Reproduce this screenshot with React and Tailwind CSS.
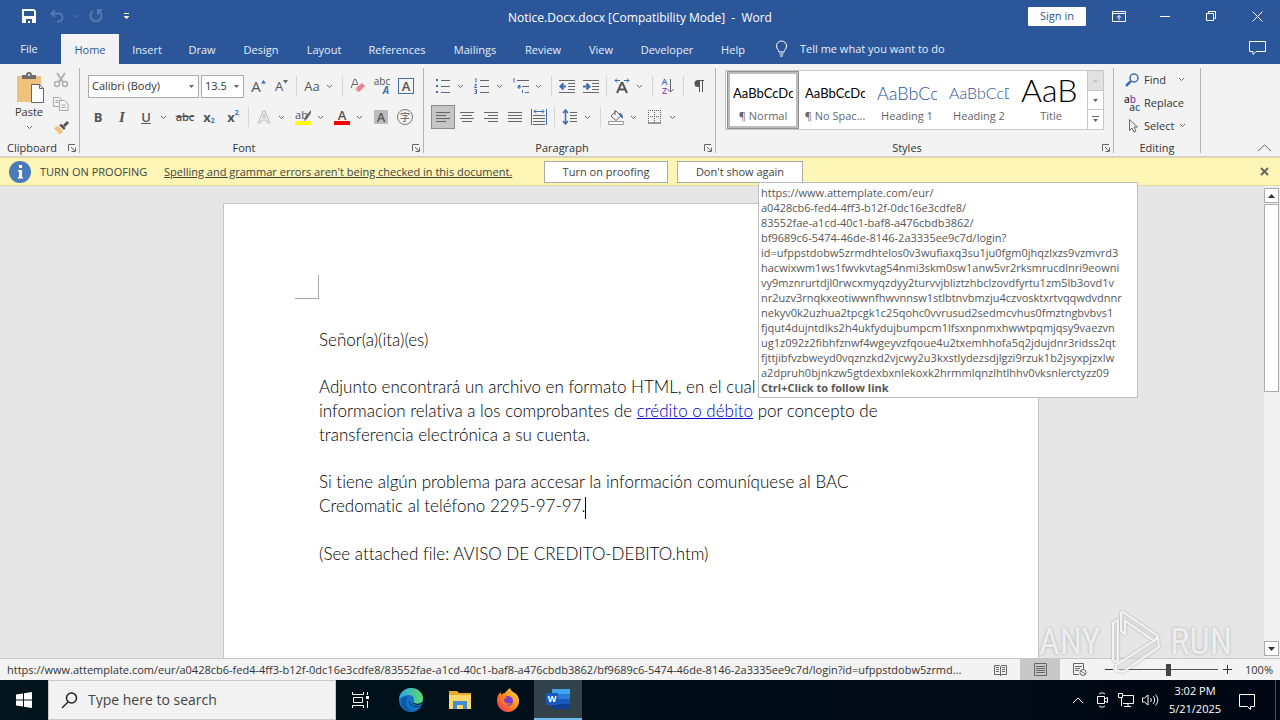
import clsx from "clsx";

const tabs = [
  { name: "Home", width: "w-[58px]", active: true },
  { name: "Insert", width: "w-14" },
  { name: "Draw", width: "w-[54px]" },
  { name: "Design", width: "w-16" },
  { name: "Layout", width: "w-[62px]" },
  { name: "References", width: "w-[84px]" },
  { name: "Mailings", width: "w-[72px]" },
  { name: "Review", width: "w-16" },
  { name: "View", width: "w-[52px]" },
  { name: "Developer", width: "w-20" },
  { name: "Help", width: "w-[52px]" },
];

const styleItems = [
  { label: "¶ Normal", preview: "AaBbCcDc", look: "text-[13px] text-black", selected: true },
  { label: "¶ No Spac...", preview: "AaBbCcDc", look: "text-[13px] text-black" },
  { label: "Heading 1", preview: "AaBbCc", look: "text-[18px] font-light text-[#2f5496]" },
  { label: "Heading 2", preview: "AaBbCcD", look: "text-[16px] font-light text-[#2f5496]" },
  { label: "Title", preview: "AaB", look: "pb-[6px] text-[32px] font-light text-black" },
];

const linkLines = [
  "https://www.attemplate.com/eur/",
  "a0428cb6-fed4-4ff3-b12f-0dc16e3cdfe8/",
  "83552fae-a1cd-40c1-baf8-a476cbdb3862/",
  "bf9689c6-5474-46de-8146-2a3335ee9c7d/login?",
  "id=ufppstdobw5zrmdhtelos0v3wufiaxq3su1ju0fgm0jhqzlxzs9vzmvrd3",
  "hacwixwm1ws1fwvkvtag54nmi3skm0sw1anw5vr2rksmrucdlnri9eowni",
  "vy9mznrurtdjl0rwcxmyqzdyy2turvvjbliztzhbclzovdfyrtu1zm5lb3ovd1v",
  "nr2uzv3rnqkxeotiwwnfhwvnnsw1stlbtnvbmzju4czvosktxrtvqqwdvdnnr",
  "nekyv0k2uzhua2tpcgk1c25qohc0vvrusud2sedmcvhus0fmztngbvbvs1",
  "fjqut4dujntdlks2h4ukfydujbumpcm1lfsxnpnmxhwwtpqmjqsy9vaezvn",
  "ug1z092z2fibhfznwf4wgeyvzfqoue4u2txemhhofa5q2jdujdnr3ridss2qt",
  "fjttjibfvzbweyd0vqznzkd2vjcwy2u3kxstlydezsdjlgzi9rzuk1b2jsyxpjzxlw",
  "a2dpruh0bjnkzw5gtdexbxnlekoxk2hrmmlqnzlhtlhhv0vksnlerctyzz09",
];

const Svg = ({ w = 16, h = 16, children, className }) => (
  <svg
    width={w}
    height={h}
    viewBox={`0 0 ${w} ${h}`}
    fill="none"
    stroke="#666"
    className={clsx("shrink-0", className)}
    aria-hidden="true"
  >
    {children}
  </svg>
);

const Chevron = ({ className }) => (
  <Svg w={7} h={5} className={className}>
    <path d="M1 1l2.500 2.500L6 1" stroke="currentColor" />
  </Svg>
);

const Cell = ({ label, children, className }) => (
  <button
    type="button"
    aria-label={label}
    className={clsx("flex h-6 w-6 shrink-0 items-center justify-center text-[#555]", className)}
  >
    {children}
  </button>
);

const More = ({ label }) => (
  <button
    type="button"
    aria-label={label}
    className="flex h-6 w-[15px] shrink-0 items-center pl-[2px] text-[#666]"
  >
    <Chevron />
  </button>
);

const Sep = () => (
  <span className="flex h-5 w-[7px] shrink-0 justify-center">
    <span className="w-px bg-[#d5d5d5]" />
  </span>
);

const Group = ({ name, width, launcher = true, children }) => (
  <section
    aria-label={name}
    className={clsx("mt-1 flex h-[85px] shrink-0 flex-col border-r border-[#b5b5b5]", width)}
  >
    <div className="h-[72px] shrink-0">{children}</div>
    <div className="flex h-4 shrink-0 items-center">
      <span className={clsx("flex-1 text-center text-[#333]", launcher && "pr-1")}>{name}</span>
      {launcher && (
        <button type="button" aria-label={`${name} settings`} className="w-[11px]">
          <Svg w={8} h={8}>
            <path d="M0.5 7V0.5H7M3 3l4 4M7.5 3.5v4h-4" />
          </Svg>
        </button>
      )}
    </div>
  </section>
);

// rows of horizontal rules: each entry is [x1, x2, y]
const Rules = ({ rows, color = "#666" }) => (
  <path d={rows.map(([a, b, y]) => `M${a} ${y}H${b}`).join("")} stroke={color} />
);

const TitleBar = () => (
  <div className="flex h-8 items-center text-white">
    <div className="flex grow basis-1/3 items-center pl-[22px]">
      <button type="button" aria-label="Save" className="mr-[14px]">
        <Svg w={14} h={14}>
          <path d="M0 0h12l2 2v12H0z" fill="#fff" stroke="none" />
          <path d="M2 2h10v5H2zM4 10h6v4H8v-2H6v2H4z" fill="#2b579a" stroke="none" />
        </Svg>
      </button>
      <button type="button" aria-label="Undo" className="flex items-center gap-2 text-[#5578b3]">
        <Svg w={14} h={14}>
          <path d="M5 1L1.500 4.500 5 8M2 4.500h6.500a4 4 0 0 1 0 8H7" stroke="currentColor" strokeWidth="2" />
        </Svg>
        <Chevron />
      </button>
      <button type="button" aria-label="Repeat" className="ml-[10px] text-[#5578b3]">
        <Svg w={14} h={14}>
          <path d="M4 2a5.500 5.500 0 1 0 6 0M9 6V1h4" stroke="currentColor" strokeWidth="2" />
        </Svg>
      </button>
      <button type="button" aria-label="Customize toolbar" className="ml-5">
        <Svg w={7} h={7}>
          <path d="M1 .5h5" stroke="#fff" />
          <path d="M0.500 3h6l-3 3z" fill="#fff" stroke="none" />
        </Svg>
      </button>
    </div>
    <h1 className="pt-1 text-[12px] whitespace-pre">Notice.Docx.docx [Compatibility Mode]  -  Word</h1>
    <div className="flex grow basis-1/3 items-center justify-end pr-[17px]">
      <button type="button" className="mr-[26px] h-[19px] w-[58px] rounded-[1px] bg-white text-[#2b579a]">
        Sign in
      </button>
      <button type="button" aria-label="Ribbon display options" className="mr-[34px]">
        <Svg w={14} h={11}>
          <path d="M.5 .5h13v10H.5zM.5 2.500h13M7 9V4.500M5 6.500l2-2 2 2" stroke="#fff" />
        </Svg>
      </button>
      <button type="button" aria-label="Minimize" className="mr-9">
        <Svg w={10} h={10}>
          <path d="M0 5.500h10" stroke="#fff" />
        </Svg>
      </button>
      <button type="button" aria-label="Restore" className="mr-9">
        <Svg w={10} h={10}>
          <path d="M.5 2.500h7v7h-7zM2.500 2V.5h7v7H8" stroke="#fff" />
        </Svg>
      </button>
      <button type="button" aria-label="Close">
        <Svg w={11} h={11}>
          <path d="M.5 .5l10 10M10.500 .5l-10 10" stroke="#fff" />
        </Svg>
      </button>
    </div>
  </div>
);

const Tabs = () => (
  <nav className="flex h-8 items-end text-[#e8eef7]">
    <a href="#file" className="mr-[3px] flex h-[31px] w-[58px] items-center justify-center">
      File
    </a>
    {tabs.map((t) => (
      <a
        key={t.name}
        href={`#${t.name.toLowerCase()}`}
        className={clsx(
          "flex h-[30px] items-center justify-center pt-[2px]",
          t.width,
          t.active && "bg-[#f3f3f3] text-[#2b579a]"
        )}
      >
        {t.name}
      </a>
    ))}
    <button type="button" className="ml-4 flex h-[31px] items-center gap-3">
      <Svg w={13} h={17}>
        <path
          d="M4 12c0-2-2.500-3-2.500-6a5 5 0 0 1 10 0c0 3-2.500 4-2.500 6zM4.500 14h4M5 16h3"
          stroke="#fff"
        />
      </Svg>
      Tell me what you want to do
    </button>
    <button type="button" aria-label="Comments" className="mr-[14px] ml-auto flex h-8 items-center">
      <Svg w={17} h={15}>
        <path d="M.5 .5h16v10H7l-3 3v-3H.5z" stroke="#fff" />
      </Svg>
    </button>
  </nav>
);

const Clipboard = () => (
  <Group name="Clipboard" width="w-20">
    <div className="flex pl-[14px]">
      <button type="button" className="flex w-[30px] flex-col items-center pt-1 text-[#333]">
        <Svg w={30} h={31}>
          <path d="M3 4h24v26H3z" fill="#eec27d" stroke="none" />
          <path d="M8 7V3h4a3 3 0 0 1 6 0h4v4z" fill="#6d6d6d" stroke="none" />
          <circle cx="15" cy="3" r="1" fill="#fff" stroke="none" />
          <path d="M17.500 12.500h8l4 4v14h-12z" fill="#fff" />
          <path d="M25.500 12.500v4h4" />
        </Svg>
        <span className="leading-[18px]">Paste</span>
        <Chevron className="mt-1 text-[#666]" />
      </button>
      <div className="flex flex-col pl-[5px]">
        <Cell label="Cut">
          <Svg>
            <g stroke="#b0b0b0" strokeWidth="2">
              <path d="M4 1l6 9M12 1L6 10" />
              <circle cx="4" cy="12" r="2.500" strokeWidth="1.500" />
              <circle cx="12" cy="12" r="2.500" strokeWidth="1.500" />
            </g>
          </Svg>
        </Cell>
        <Cell label="Copy">
          <Svg>
            <g stroke="#a8a8a8">
              <path d="M6 10.500H.5v-9h6l3 3M2.500 4.500h3M2.500 6.500h3" />
              <path d="M6.500 4.500h5l3.500 3.500v6.500H6.500zM8.500 9h4M8.500 11.500h4" />
            </g>
          </Svg>
        </Cell>
        <Cell label="Format painter">
          <Svg>
            <path d="M1 8l4-2 5 5-3 4z" fill="#eec27d" stroke="none" />
            <path d="M6 5l5 5 1.500-2L8.500 4zM10 5l4-4 2 2-4 4z" fill="#555" stroke="none" />
          </Svg>
        </Cell>
      </div>
    </div>
  </Group>
);

const Combo = ({ label, value, width }) => (
  <label className={clsx("flex h-[23px] items-center border border-[#ababab] bg-white pr-1", width)}>
    <span className="sr-only">{label}</span>
    <select className="h-full min-w-0 flex-1 appearance-none bg-transparent pl-[3px] text-[#333] outline-none">
      <option>{value}</option>
    </select>
    <Svg w={5} h={3}>
      <path d="M0 0h5L2.500 3z" fill="#666" stroke="none" />
    </Svg>
  </label>
);

const FontGroup = () => (
  <Group name="Font" width="w-[344px]">
    <div className="flex items-center pt-[6px] pl-2">
      <Combo label="Font" value="Calibri (Body)" width="w-[111px] mr-[2px]" />
      <Combo label="Font size" value="13.5" width="w-[43px] mr-[3px]" />
      <Cell label="Grow font" className="w-[23px] text-[15px]">
        A
        <Svg w={5} h={12}>
          <path d="M0 3.500L2.500 0 5 3.500z" fill="#3e6db5" stroke="none" />
        </Svg>
      </Cell>
      <Cell label="Shrink font" className="w-[23px] text-[13px]">
        A
        <Svg w={5} h={12}>
          <path d="M0 0h5L2.500 3.500z" fill="#666" stroke="none" />
        </Svg>
      </Cell>
      <Sep />
      <Cell label="Change case" className="text-[13px]">Aa</Cell>
      <More label="Change case options" />
      <Sep />
      <Cell label="Clear formatting">
        <Svg>
          <path d="M1 10L4.500 1h1L8 7M2.500 6.500H7" />
          <path d="M6 10l6-5 3 3-6 6z" fill="#e9808f" stroke="none" />
          <path d="M5 11l1-1 3 4H7z" fill="#f3b0ba" stroke="none" />
        </Svg>
      </Cell>
      <Cell label="Phonetic guide" className="flex-col">
        <span className="text-[10px] leading-[9px]">abc</span>
        <span className="pl-2 text-[10px] leading-[9px] font-bold text-[#3e6db5] italic">A</span>
      </Cell>
      <Cell label="Character border">
        <span className="flex h-4 w-4 items-center justify-center border border-[#41719c] text-[13px] font-semibold">
          A
        </span>
      </Cell>
    </div>
    <div className="flex items-center pt-[7px] pl-[6px]">
      <Cell label="Bold" className="text-[13px] font-bold">B</Cell>
      <Cell label="Italic" className="font-['Liberation_Serif',serif] text-[15px] font-semibold italic">I</Cell>
      <Cell label="Underline" className="text-[13px] font-semibold underline">U</Cell>
      <More label="Underline options" />
      <Cell label="Strikethrough" className="font-semibold line-through">abc</Cell>
      <Cell label="Subscript" className="text-[13px] font-bold">
        x<span className="pt-2 text-[7px] text-[#3e6db5]">2</span>
      </Cell>
      <Cell label="Superscript" className="text-[13px] font-bold">
        x<span className="pb-2 text-[7px] text-[#3e6db5]">2</span>
      </Cell>
      <Sep />
      <Cell label="Text effects">
        <Svg>
          <path d="M2 14L7 2h2l5 12h-2.500l-1-3h-5l-1 3zM6.500 8.500h3L8 4.500z" stroke="#bbb" />
        </Svg>
      </Cell>
      <More label="Text effects options" />
      <Cell label="Text highlight color" className="flex-col">
        <span className="flex h-3 items-center text-[11px]">
          ab
          <Svg w={7} h={11} className="-ml-1">
            <path d="M7 0v3L3 9l-3 2 1-4z" fill="#666" stroke="none" />
          </Svg>
        </span>
        <span className="h-1 w-4 bg-[#ffff00]" />
      </Cell>
      <More label="Highlight options" />
      <Cell label="Font color" className="flex-col">
        <span className="h-3 text-[13px] leading-3 font-semibold">A</span>
        <span className="h-1 w-4 bg-[#ff0000]" />
      </Cell>
      <More label="Font color options" />
      <Cell label="Character shading">
        <span className="flex h-[14px] w-[14px] items-center justify-center bg-[#bdbdbd] text-[13px] font-semibold">
          A
        </span>
      </Cell>
      <Cell label="Enclose characters">
        <span className="flex h-4 w-4 items-center justify-center rounded-full border border-[#777] font-['Noto_Sans_CJK_SC',sans-serif] text-[10px]">
          字
        </span>
      </Cell>
    </div>
  </Group>
);

const ParagraphGroup = () => (
  <Group name="Paragraph" width="w-[292px]">
    <div className="flex items-center pt-[6px] pl-[7px]">
      <Cell label="Bullets">
        <Svg>
          <path d="M1 1h2v2H1zM1 7h2v2H1zM1 13h2v2H1z" fill="#3e6db5" stroke="none" />
          <Rules rows={[[6, 15, 2.5], [6, 15, 8.5], [6, 15, 14.5]]} />
        </Svg>
      </Cell>
      <More label="Bullet options" />
      <Cell label="Numbering">
        <Svg>
          <path
            d="M1 1.500l1-1v4M.5 6.500h2l-2 3h2.500M.5 11.500h2v4H.5M1 13.500h1.500"
            stroke="#3e6db5"
          />
          <Rules rows={[[6, 15, 2.5], [6, 15, 8.5], [6, 15, 14.5]]} />
        </Svg>
      </Cell>
      <More label="Numbering options" />
      <Cell label="Multilevel list">
        <Svg>
          <path d="M0 1.500l1-1v4M5 7.500h2v2.500H5V8.500h2M9.500 12v3" stroke="#3e6db5" />
          <Rules rows={[[4, 16, 2.5], [9, 16, 8.5], [12, 16, 14.5]]} />
        </Svg>
      </Cell>
      <More label="Multilevel options" />
      <Sep />
      <Cell label="Decrease indent">
        <Svg>
          <Rules rows={[[0, 16, 2.5], [9, 16, 5.5], [9, 16, 8.5], [9, 16, 11.5], [0, 16, 14.5]]} />
          <path d="M7 8.500H2M4.500 5.500l-3 3 3 3" stroke="#3e6db5" strokeWidth="2" />
        </Svg>
      </Cell>
      <Cell label="Increase indent">
        <Svg>
          <Rules rows={[[0, 16, 2.5], [9, 16, 5.5], [9, 16, 8.5], [9, 16, 11.5], [0, 16, 14.5]]} />
          <path d="M0 8.500h5M3.500 5.500l3 3-3 3" stroke="#3e6db5" strokeWidth="2" />
        </Svg>
      </Cell>
      <Sep />
      <Cell label="Asian layout">
        <Svg>
          <path d="M3 15L7.500 5h1L13 15M4.500 11.500h7" stroke="#555" strokeWidth="2" />
          <path d="M6 2.500H1M3 .5l-2 2 2 2M10 2.500h5M13 .5l2 2-2 2" stroke="#3e6db5" />
        </Svg>
      </Cell>
      <More label="Asian layout options" />
      <Sep />
      <Cell label="Sort">
        <span className="flex flex-col text-[9px] leading-[9px] font-semibold">
          <span className="text-[#3e6db5]">A</span>
          <span className="text-[#8a4fa8]">Z</span>
        </span>
        <Svg w={7} h={16}>
          <path d="M3.500 1v13M.5 11l3 3 3-3" />
        </Svg>
      </Cell>
      <Sep />
      <Cell label="Show paragraph marks">
        <Svg w={12} h={14}>
          <path d="M5 1h6v1h-1v11H9V2H7v11H6V8H5a3.500 3.500 0 0 1 0-7z" fill="#555" stroke="none" />
        </Svg>
      </Cell>
    </div>
    <div className="flex items-center pt-[7px] pl-[7px]">
      <Cell label="Align left" className="border border-[#8c8c8c] bg-[#c5c5c5]">
        <Svg>
          <Rules rows={[[1, 15, 3.5], [1, 11, 6.5], [1, 15, 9.5], [1, 11, 12.5]]} />
        </Svg>
      </Cell>
      <Cell label="Center">
        <Svg>
          <Rules rows={[[1, 15, 3.5], [3, 13, 6.5], [1, 15, 9.5], [3, 13, 12.5]]} />
        </Svg>
      </Cell>
      <Cell label="Align right">
        <Svg>
          <Rules rows={[[1, 15, 3.5], [5, 15, 6.5], [1, 15, 9.5], [5, 15, 12.5]]} />
        </Svg>
      </Cell>
      <Cell label="Justify">
        <Svg>
          <Rules rows={[[1, 15, 3.5], [1, 15, 6.5], [1, 15, 9.5], [1, 15, 12.5]]} />
        </Svg>
      </Cell>
      <Cell label="Distributed">
        <Svg>
          <path d="M.5 0v16M15.500 0v16M3 2.500h10M5 .5l-2 2 2 2M11 .5l2 2-2 2" stroke="#3e6db5" />
          <Rules rows={[[2, 14, 6.5], [2, 14, 9.5], [2, 14, 12.5], [2, 14, 15.5]]} />
        </Svg>
      </Cell>
      <Sep />
      <Cell label="Line spacing">
        <Svg>
          <path d="M3.500 1v14M1 4l2.500-3L6 4M1 12l2.500 3L6 12" stroke="#3e6db5" strokeWidth="1.500" />
          <Rules rows={[[8, 15, 3.5], [8, 15, 6.5], [8, 15, 9.5], [8, 15, 12.5]]} />
        </Svg>
      </Cell>
      <More label="Line spacing options" />
      <Sep />
      <Cell label="Shading">
        <Svg>
          <path d="M3 7l5-5 5 5-5 4.500zM7 1v5" />
          <path d="M11 4c3 0 4 2 4 6l-3-3z" fill="#3e6db5" stroke="none" />
          <path d="M.5 12.500h15v3H.5z" fill="#fff" stroke="#999" />
        </Svg>
      </Cell>
      <More label="Shading options" />
      <Cell label="Borders">
        <Svg w={14} h={14}>
          <path d="M.5 0v13M6.500 0v13M12.500 0v13M0 .5h13M0 6.500h13" strokeDasharray="1 1" />
          <path d="M0 13h13" stroke="#444" />
        </Svg>
      </Cell>
      <More label="Border options" />
    </div>
  </Group>
);

const StylesGroup = () => (
  <Group name="Styles" width="w-[398px]">
    <div className="pt-[2px] pl-[9px]">
      <div className="flex h-[60px] w-[379px] border border-[#c6c6c6] bg-white pl-px">
        {styleItems.map((s) => (
          <button
            key={s.label}
            type="button"
            className={clsx(
              "flex w-[72px] flex-col items-center overflow-hidden border-[3px] pt-[3px]",
              s.selected ? "border-[#bcbcbc] outline -outline-offset-1 outline-[#8f8f8f]" : "border-transparent"
            )}
          >
            <span
              className={clsx(
                "flex h-[31px] w-[60px] shrink-0 items-center overflow-hidden font-['Lato',sans-serif] whitespace-nowrap",
                s.look
              )}
            >
              {s.preview}
            </span>
            <span className="whitespace-nowrap text-[#666]">{s.label}</span>
          </button>
        ))}
        <div className="ml-auto flex w-4 flex-col border-l border-[#c6c6c6]">
          <button type="button" aria-label="Previous styles" className="flex flex-1 items-center justify-center bg-[#e1e1e1]">
            <Svg w={5} h={3}>
              <path d="M0 3h5L2.500 0z" fill="#c0c0c0" stroke="none" />
            </Svg>
          </button>
          <button type="button" aria-label="Next styles" className="flex flex-1 items-center justify-center border-y border-[#c6c6c6]">
            <Svg w={5} h={3}>
              <path d="M0 0h5L2.500 3z" fill="#666" stroke="none" />
            </Svg>
          </button>
          <button type="button" aria-label="More styles" className="flex flex-1 items-center justify-center">
            <Svg w={7} h={7}>
              <path d="M0 .5h7" />
              <path d="M1 3h5L3.500 6z" fill="#666" stroke="none" />
            </Svg>
          </button>
        </div>
      </div>
    </div>
  </Group>
);

const EditingGroup = () => (
  <Group name="Editing" width="w-[87px]" launcher={false}>
    <div className="flex flex-col pl-[10px] text-[#333]">
      <button type="button" className="flex h-[23px] items-center gap-1">
        <Svg>
          <circle cx="10" cy="6" r="4" stroke="#3e6db5" strokeWidth="1.500" />
          <path d="M7 9l-5 5" stroke="#3e6db5" strokeWidth="2.500" />
        </Svg>
        <span className="flex-1 text-left">Find</span>
        <Chevron className="mr-[15px] text-[#666]" />
      </button>
      <button type="button" className="flex h-[23px] items-center gap-1">
        <span className="flex w-4 flex-col text-[10px] leading-[8px] font-semibold">
          <span className="text-left">a<span className="text-[#8a4fa8]">b</span></span>
          <span className="text-right text-[#555]">a<span className="text-[#3e6db5]">c</span></span>
        </span>
        Replace
      </button>
      <button type="button" className="flex h-[23px] items-center gap-1">
        <Svg>
          <path d="M5.500 1.500v11l2.500-2.500 2 4 2-1-2-4h3.500z" />
        </Svg>
        <span className="flex-1 text-left">Select</span>
        <Chevron className="mr-[14px] text-[#666]" />
      </button>
    </div>
  </Group>
);

const Ribbon = () => (
  <div className="flex h-[93px] border-b border-[#d2d0ce] bg-[#f3f3f3]">
    <Clipboard />
    <FontGroup />
    <ParagraphGroup />
    <StylesGroup />
    <EditingGroup />
    <button type="button" aria-label="Collapse ribbon" className="mr-2 mb-1 ml-auto self-end">
      <Svg w={15} h={9}>
        <path d="M1 8l6.500-6L14 8" />
      </Svg>
    </button>
  </div>
);

const ProofingBar = () => (
  <div className="flex h-[29px] items-center border-y border-[#e3dca0] bg-[#fdf5b5] text-[#444]">
    <Svg w={22} h={22} className="ml-[9px]">
      <circle cx="11" cy="11" r="11" fill="#4a7ab8" stroke="none" />
      <path d="M10 4h3v3h-3zM9 9h4v7h1v1.500H9V16h1v-5.500H9z" fill="#fff" stroke="none" />
    </Svg>
    <span className="ml-[9px] w-[124px] whitespace-nowrap">TURN ON PROOFING</span>
    <a href="#proofing" className="w-[380px] whitespace-nowrap underline">
      Spelling and grammar errors aren't being checked in this document.
    </a>
    <button type="button" className="h-[22px] w-[124px] border border-[#ababab] bg-white">
      Turn on proofing
    </button>
    <button type="button" className="ml-[9px] h-[22px] w-[126px] border border-[#ababab] bg-white">
      Don't show again
    </button>
    <button type="button" aria-label="Dismiss" className="mr-[11px] ml-auto">
      <Svg w={9} h={9}>
        <path d="M1 1l7 7M8 1L1 8" strokeWidth="2" />
      </Svg>
    </button>
  </div>
);

const Scrollbar = () => (
  <div className="flex w-4 shrink-0 flex-col gap-px bg-[#f0f0f0] py-[2px]">
    <button type="button" aria-label="Scroll up" className="flex h-[15px] w-[15px] items-center justify-center border border-[#ababab] bg-white">
      <Svg w={7} h={4}>
        <path d="M0 4h7L3.500 0z" fill="#333" stroke="none" />
      </Svg>
    </button>
    <div className="h-[188px] w-[15px] border border-[#ababab] bg-white" />
    <button type="button" aria-label="Scroll down" className="mt-auto flex h-[15px] w-[15px] items-center justify-center border border-[#ababab] bg-white">
      <Svg w={7} h={4}>
        <path d="M0 0h7L3.500 4z" fill="#333" stroke="none" />
      </Svg>
    </button>
  </div>
);

const LinkTooltip = () => (
  <div
    role="tooltip"
    className="absolute -top-1 left-1/2 z-10 ml-[118px] h-[216px] w-[380px] border border-[#bebebe] bg-white pt-[2px] pl-[2px] leading-[15px] whitespace-nowrap text-[#575757]"
  >
    {linkLines.map((line) => (
      <div key={line}>{line}</div>
    ))}
    <strong>Ctrl+Click to follow link</strong>
  </div>
);

const Watermark = () => (
  <div className="pointer-events-none absolute right-12 -bottom-4 z-10 flex items-center font-['Liberation_Sans_Narrow','Roboto_Condensed',sans-serif] text-[36px] leading-[64px] text-white/75 [text-shadow:0_0_3px_#aaa]">
    ANY
    <Svg w={62} h={62} className="mx-1 drop-shadow-[0_0_1px_#999]">
      <path
        d="M9 12v37l5 3V9l-5 3zM17 2v18l4 3V10l29 20 4-5L19 1zM54 27L12 54v6l7 1 36-25z"
        fill="#fff"
        fillOpacity="0.3"
        stroke="#fff"
        strokeOpacity="0.8"
        strokeWidth="2"
      />
    </Svg>
    RUN
  </div>
);

const Document = () => (
  <main className="relative flex min-h-0 flex-1">
    <div className="flex flex-1 justify-center overflow-hidden bg-[#e6e6e6] pt-[17px] pr-[2px]">
      <article className="h-[1056px] w-[816px] border border-[#c6c6c6] bg-white px-[95px] pt-[71px] font-['Lato',sans-serif] text-[17px] leading-6 font-light text-black [font-variant-ligatures:none]">
        <div className="mb-[29px] -ml-6 h-6 w-6 border-r border-b border-[#aaa]" />
        <p className="mb-[23px]">Señor(a)(ita)(es)</p>
        <p className="mb-[23px] whitespace-nowrap">
          Adjunto encontrará un archivo en formato HTML, en el cual
          <br />
          informacion relativa a los comprobantes de{" "}
          <a href="#login" className="text-[#0000c8] underline">crédito o débito</a> por concepto de
          <br />
          transferencia electrónica a su cuenta.
        </p>
        <p className="mb-[23px] whitespace-nowrap">
          Si tiene algún problema para accesar la información comuníquese al BAC
          <br />
          Credomatic al teléfono 2295-97-97.
          <span className="inline-block h-[22px] w-px bg-black align-middle" />
        </p>
        <p>(See attached file: AVISO DE CREDITO-DEBITO.htm)</p>
      </article>
    </div>
    <Scrollbar />
    <LinkTooltip />
    <Watermark />
  </main>
);

const StatusBar = () => (
  <footer className="flex h-[22px] shrink-0 items-center border-t border-[#c6c6c6] bg-[#f3f3f3] text-[#333]">
    <span className="flex-1 pl-[7px] whitespace-nowrap">
      https://www.attemplate.com/eur/a0428cb6-fed4-4ff3-b12f-0dc16e3cdfe8/83552fae-a1cd-40c1-baf8-a476cbdb3862/bf9689c6-5474-46de-8146-2a3335ee9c7d/login?id=ufppstdobw5zrmd...
    </span>
    <button type="button" aria-label="Read mode" className="flex h-full w-10 items-center justify-center">
      <Svg w={13} h={12}>
        <path d="M6.500 2v10M.5 1.500h5l1 1 1-1h5v9h-5l-1 1-1-1h-5zM2 3.500h3M2 5.500h3M2 7.500h3M8 3.500h3M8 5.500h3M8 7.500h3" />
      </Svg>
    </button>
    <button type="button" aria-label="Print layout" className="flex h-full w-10 items-center justify-center bg-[#c8c8c8]">
      <Svg w={13} h={13}>
        <path d="M.5 .5h12v12H.5zM2 3.500h9M2 5.500h9M2 7.500h9M2 9.500h9" />
      </Svg>
    </button>
    <button type="button" aria-label="Web layout" className="flex h-full w-10 items-center justify-center">
      <Svg w={14} h={13}>
        <path d="M6 11.500H.5V.5h10V6M2 3.500h7M2 5.500h5M2 7.500h4" />
        <circle cx="10" cy="9.500" r="3" />
        <path d="M8 8l4 3" />
      </Svg>
    </button>
    <button type="button" aria-label="Zoom out" className="mr-[6px] ml-[5px]">
      <Svg w={8} h={9}>
        <path d="M0 4.500h8" stroke="#333" />
      </Svg>
    </button>
    <input
      type="range"
      aria-label="Zoom"
      defaultValue="50"
      className="h-3 w-[99px] appearance-none bg-[linear-gradient(#555,#555)] bg-[length:100%_1px] bg-center bg-no-repeat [&::-webkit-slider-thumb]:h-3 [&::-webkit-slider-thumb]:w-[5px] [&::-webkit-slider-thumb]:appearance-none [&::-webkit-slider-thumb]:bg-[#444]"
    />
    <button type="button" aria-label="Zoom in" className="ml-[5px]">
      <Svg w={9} h={9}>
        <path d="M0 4.500h9M4.500 0v9" stroke="#333" />
      </Svg>
    </button>
    <button type="button" className="w-12 pr-[7px] text-right">100%</button>
  </footer>
);

const EdgeIcon = () => (
  <Svg w={24} h={24}>
    <defs>
      <linearGradient id="edgeTop" x1="0" x2="1">
        <stop offset="0" stopColor="#2aa9e8" />
        <stop offset="1" stopColor="#5fd86a" />
      </linearGradient>
    </defs>
    <circle cx="12" cy="12" r="12" fill="#1372c4" stroke="none" />
    <path d="M0 11C1 4 6 0 12 0c7 0 12 5 12 10 0 4-3 6-6 6-3 0-4-1-4-2s1-1 1-3-2-4-5-4c-4 0-8 2-10 4z" fill="url(#edgeTop)" stroke="none" />
    <path d="M9 9c-4 4-2 12 5 14-6 1-12-3-12-9 0-4 4-6 7-5z" fill="#0c59a4" stroke="none" />
    <path d="M10 12c-1 4 3 7 8 7 2 0 4-1 6-3 0 1-1 2-1 3l-4-1c-5 1-9-2-9-6zM24 14c-1 2-3 3-6 3-3-1-5-2-4-4 0 3 5 4 10 1z" fill="#021720" stroke="none" />
  </Svg>
);

const FolderIcon = () => (
  <Svg w={22} h={20}>
    <path d="M0 1h8l2 2h12v5H0z" fill="#e8a92c" stroke="none" />
    <path d="M0 5h22v14H0z" fill="#ffd667" stroke="none" />
    <path d="M4 11h14v8h-4v-4H8v4H4z" fill="#3f8fd0" stroke="none" />
  </Svg>
);

const FirefoxIcon = () => (
  <Svg w={24} h={24}>
    <defs>
      <linearGradient id="fire" x1="1" y1="0" x2="0" y2="1">
        <stop offset="0" stopColor="#ffe14a" />
        <stop offset="0.5" stopColor="#ff8a1e" />
        <stop offset="1" stopColor="#f0265c" />
      </linearGradient>
    </defs>
    <path d="M14 0c1 3 3 4 5 5 3 2 4 5 4 8 0 6-5 11-11 11S1 19 1 13c0-4 1-7 4-9v3c1-1 2-2 4-2 1-2 3-3 5-5z" fill="url(#fire)" stroke="none" />
    <circle cx="12" cy="13" r="5" fill="#7a3fd6" stroke="none" />
    <path d="M4 8c2-1 5-1 7 2-2 0-3 1-3 2 0 3 3 4 7 3-3 4-11 3-11-7z" fill="#ff7b1c" stroke="none" />
  </Svg>
);

const WordIcon = () => (
  <span className="flex h-5 w-6 items-center bg-[linear-gradient(#41a5ee_0_25%,#2b7cd3_25%_50%,#185abd_50%_75%,#103f91_75%)] bg-[length:18px_20px] bg-right bg-no-repeat">
    <span className="flex h-3 w-3 items-center justify-center bg-[#185abd] text-[9px] font-bold text-white">
      W
    </span>
  </span>
);

const Taskbar = () => (
  <div className="flex h-10 shrink-0 items-center bg-[linear-gradient(90deg,#02161d,#000c18_60%,#020713)] text-white">
    <button type="button" aria-label="Start" className="flex h-full w-12 items-center justify-center">
      <Svg w={16} h={16}>
        <path d="M0 2.500L7 1.500V7.500H0zM8 1.300L16 0v7.500H8zM0 8.500h7v6L0 13.500zM8 8.500h8V16l-8-1.300z" fill="#fff" stroke="none" />
      </Svg>
    </button>
    <label className="flex h-full w-72 items-center gap-[10px] border border-[#c8c8c8] bg-[#f2f2f2] pl-3">
      <Svg w={17} h={17}>
        <circle cx="10.500" cy="6" r="5" stroke="#222" strokeWidth="1.500" />
        <path d="M7 10l-6 6" stroke="#222" strokeWidth="1.500" />
      </Svg>
      <input
        type="text"
        aria-label="Search"
        placeholder="Type here to search"
        className="min-w-0 flex-1 bg-transparent text-[14px] outline-none placeholder:text-[#444]"
      />
    </label>
    <button type="button" aria-label="Task view" className="flex h-full w-12 items-center justify-center">
      <Svg w={17} h={16}>
        <path d="M.5 0v2.500h11V0M1.500 5.500h9v5h-9zM.5 16v-2.500h11V16M15.500 0v3M15.500 9v7" stroke="#fff" />
        <path d="M14 4h3v3h-3z" fill="#fff" stroke="none" />
      </Svg>
    </button>
    <button type="button" aria-label="Edge" className="flex h-full w-[54px] items-center justify-center">
      <EdgeIcon />
    </button>
    <button type="button" aria-label="File Explorer" className="flex h-full w-11 items-center justify-center">
      <FolderIcon />
    </button>
    <button type="button" aria-label="Firefox" className="flex h-full w-[52px] items-center justify-center">
      <FirefoxIcon />
    </button>
    <button type="button" aria-label="Word" className="flex h-full w-12 items-center justify-center border-b-2 border-[#76b9ed] bg-[#33434b]">
      <WordIcon />
    </button>
    <div className="ml-auto flex h-full items-center">
      <button type="button" aria-label="Hidden icons" className="mr-3">
        <Svg w={12} h={8}>
          <path d="M1 7l5-5 5 5" stroke="#fff" />
        </Svg>
      </button>
      <Svg w={12} h={16} className="mr-[10px]">
        <path d="M1.500 4.500h7v7h-7zM8.500 7l3-1.500v5L8.500 9M3 2c2-1.500 4-1.500 6 0M3 14c2 1.500 4 1.500 6 0" stroke="#fff" />
      </Svg>
      <Svg w={16} h={15} className="mr-2">
        <path d="M5 2.500h10.500v8H5M3.500 5v8M.5 .5h4v4h-4zM10 11v3M6 13.500h7" stroke="#fff" />
      </Svg>
      <Svg w={17} h={14} className="mr-2">
        <path d="M.5 5v4h2L6 12V2L2.500 5zM8.500 5c1 1 1 3 0 4M11 3c2 2 2 6 0 8M13.500 1.500c3 3 3 8 0 11" stroke="#fff" />
      </Svg>
      <div className="w-14 text-center leading-[18px]">
        <div>3:02 PM</div>
        <div>5/21/2025</div>
      </div>
      <button type="button" aria-label="Notifications" className="mr-5 ml-4 pt-1">
        <Svg w={16} h={17}>
          <path d="M.5 .5h15v12h-4v3l-3-3h-8z" stroke="#fff" />
        </Svg>
      </button>
      <span className="mr-1 h-full w-px bg-[#4a5058]" />
    </div>
  </div>
);

export default function App() {
  return (
    <div className="flex h-screen flex-col overflow-hidden font-['Open_Sans',sans-serif] text-[11px] leading-4">
      <header className="shrink-0">
        <div className="bg-[#2b579a]">
          <TitleBar />
          <Tabs />
        </div>
        <Ribbon />
        <ProofingBar />
      </header>
      <Document />
      <StatusBar />
      <Taskbar />
    </div>
  );
}
